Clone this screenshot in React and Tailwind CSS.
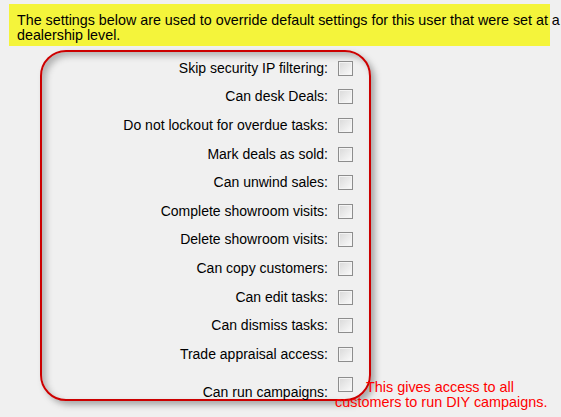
const settings = [
  'Skip security IP filtering:',
  'Can desk Deals:',
  'Do not lockout for overdue tasks:',
  'Mark deals as sold:',
  'Can unwind sales:',
  'Complete showroom visits:',
  'Delete showroom visits:',
  'Can copy customers:',
  'Can edit tasks:',
  'Can dismiss tasks:',
  'Trade appraisal access:',
]

function Checkbox({ className = '' }) {
  return (
    <span
      className={[
        'inline-block h-[15px] w-[15px] border border-[#8d8d8d] bg-gradient-to-br from-[#d9d9d9] to-[#fbfbfb] shadow-[inset_0_0_0_1px_#f4f4f4]',
        className,
      ].join(' ')}
    />
  )
}

function App() {
  return (
    <div className="h-[417px] overflow-hidden bg-[#f0f0f0] font-['Liberation_Sans',Arial,sans-serif] text-[14px] leading-[15px] text-black">
      <div className="ml-[9px] mt-[4px] h-[42px] w-[541px] bg-[#f4f43b] pl-[8px] pt-[9px]">
        <p className="w-[560px] text-[14.3px] leading-[15px]">
          The settings below are used to override default settings for this user that were set at a
          <br />
          dealership level.
        </p>
      </div>

      <div className="ml-[40px] mt-[4px] h-[351px] w-[331px] rounded-[26px] border-2 border-[#cc0000] pt-[2px] shadow-[4px_4px_6px_#a8a8a8,inset_4px_4px_6px_#b4b4b4]">
        {settings.map((label) => (
          <div key={label} className="flex h-[28.6px] items-center">
            <span className="w-[286px] shrink-0 text-right">{label}</span>
            <Checkbox className="ml-[10px] shrink-0" />
          </div>
        ))}

        <div className="flex items-start">
          <span className="mt-[16.5px] w-[286px] shrink-0 text-right">Can run campaigns:</span>
          <p className="ml-[7px] mt-[8px] w-[213px] shrink-0 text-[14.4px] text-[#ff0000]">
            <Checkbox className="ml-[3px] mr-[13px] align-baseline" />
            This gives access to all customers to run DIY campaigns.
          </p>
        </div>
      </div>
    </div>
  )
}

export default App
